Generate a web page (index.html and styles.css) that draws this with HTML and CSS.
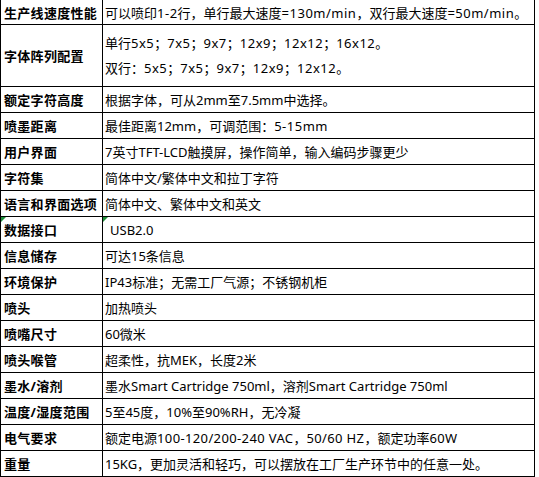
FILE: index.html
```html
<!DOCTYPE html>
<html lang="zh-CN">
<head>
<meta charset="utf-8">
<title>规格参数</title>
<link rel="stylesheet" href="styles.css">
</head>
<body>
<div class="spec">
  <div class="k">生产线速度性能</div><div class="v"><span>可以喷印<span class="n">1-2</span>行，单行最大速度<span class="n">=130m/min</span>，双行最大速度<span class="n">=50m/min</span>。</span></div>
  <div class="k">字体阵列配置</div><div class="v multi"><span>单行<span class="n">5x5</span>；<span class="n">7x5</span>；<span class="n">9x7</span>；<span class="n">12x9</span>；<span class="n">12x12</span>；<span class="n">16x12</span>。</span><span>双行：<span class="n">5x5</span>；<span class="n">7x5</span>；<span class="n">9x7</span>；<span class="n">12x9</span>；<span class="n">12x12</span>。</span></div>
  <div class="k">额定字符高度</div><div class="v">根据字体，可从2mm至7.5mm中选择。</div>
  <div class="k">喷墨距离</div><div class="v"><span>最佳距离12mm，可调范围：<span class="n">5-15mm</span></span></div>
  <div class="k">用户界面</div><div class="v">7英寸TFT-LCD触摸屏，操作简单，输入编码步骤更少</div>
  <div class="k">字符集</div><div class="v">简体中文/繁体中文和拉丁字符</div>
  <div class="k">语言和界面选项</div><div class="v">简体中文、繁体中文和英文</div>
  <div class="k flag">数据接口</div><div class="v flag indent">USB2.0</div>
  <div class="k">信息储存</div><div class="v">可达15条信息</div>
  <div class="k">环境保护</div><div class="v">IP43标准；无需工厂气源；不锈钢机柜</div>
  <div class="k">喷头</div><div class="v">加热喷头</div>
  <div class="k">喷嘴尺寸</div><div class="v">60微米</div>
  <div class="k">喷头喉管</div><div class="v">超柔性，抗MEK，长度2米</div>
  <div class="k">墨水/溶剂</div><div class="v">墨水Smart Cartridge 750ml，溶剂Smart Cartridge 750ml</div>
  <div class="k">温度/湿度范围</div><div class="v">5至45度，10%至90%RH，无冷凝</div>
  <div class="k">电气要求</div><div class="v"><span>额定电源<span class="n2">100-120/200-240 VAC</span>，<span class="n2">50/60 HZ</span>，额定功率<span class="n2">60W</span></span></div>
  <div class="k">重量</div><div class="v">15KG，更加灵活和轻巧，可以摆放在工厂生产环节中的任意一处。</div>
</div>
</body>
</html>
```
FILE: styles.css
```css
* { box-sizing: border-box; }
html, body { margin: 0; padding: 0; background: #fff; }
body {
  font-family: "Noto Sans", "Noto Sans CJK SC", sans-serif;
  font-size: 13px;
  color: #000;
}
.spec {
  display: grid;
  grid-template-columns: 102px 432px;
  grid-template-rows: 25px 62px repeat(15, 26px);
  border-left: 1px solid #000;
  width: 535px;
}
.k, .v {
  display: flex;
  align-items: center;
  border-right: 1px solid #000;
  border-bottom: 1px solid #000;
  white-space: nowrap;
  overflow: hidden;
  position: relative;
}
.k {
  font-weight: bold;
  padding-left: 3px;
  letter-spacing: 0.3px;
}
.v {
  padding-left: 2px;
}
.v.multi {
  flex-direction: column;
  align-items: flex-start;
  justify-content: center;
  line-height: 25px;
}
.n { letter-spacing: 0.5px; }
.n2 { letter-spacing: 0.37px; }
.v.indent { padding-left: 7px; }
.flag::before {
  content: "";
  position: absolute;
  left: 0;
  top: 0;
  width: 0;
  height: 0;
  border-top: 5px solid #1f8f3a;
  border-right: 5px solid transparent;
}
```
